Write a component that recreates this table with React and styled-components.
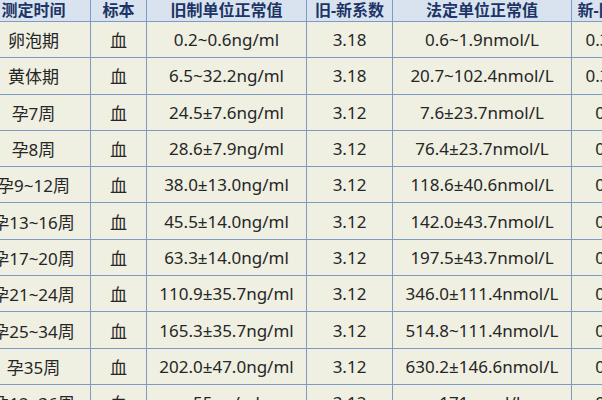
import React from "react";
import styled, { createGlobalStyle } from "styled-components";

const GlobalStyle = createGlobalStyle`
    html, body {
        margin: 0;
        padding: 0;
        background: #eff0e2;
    }
    body {
        font-family: "Noto Sans", "Noto Sans CJK SC", sans-serif;
    }
`;

const Frame = styled.div`
    width: 602px;
    height: 400px;
    overflow: hidden;
    background: #eff0e2;
`;

const Table = styled.table`
    margin-left: -24px;
    border-collapse: collapse;
    table-layout: fixed;
    width: 676px;
`;

const HeadCell = styled.th`
    height: 21px;
    padding: 0;
    background: #d9e3f0;
    color: #1c3566;
    font-size: 16px;
    font-weight: 700;
    line-height: 21px;
    text-align: center;
    white-space: nowrap;
    overflow: hidden;
    border: 1px solid #7d9ac4;
    border-top: none;
`;

const Row = styled.tr`
    height: 36.3px;
`;

const Cell = styled.td`
    padding: 0;
    color: #262626;
    font-size: 17px;
    text-align: center;
    white-space: nowrap;
    overflow: hidden;
    border: 1px solid #7d9ac4;
`;

const columns = [
    { title: "测定时间", width: 114 },
    { title: "标本", width: 56 },
    { title: "旧制单位正常值", width: 160 },
    { title: "旧-新系数", width: 86 },
    { title: "法定单位正常值", width: 179 },
    { title: "新-旧系数", width: 81 },
];

const rows = [
    ["卵泡期", "血", "0.2~0.6ng/ml", "3.18", "0.6~1.9nmol/L", "0.3145"],
    ["黄体期", "血", "6.5~32.2ng/ml", "3.18", "20.7~102.4nmol/L", "0.3145"],
    ["孕7周", "血", "24.5±7.6ng/ml", "3.12", "7.6±23.7nmol/L", "0.32"],
    ["孕8周", "血", "28.6±7.9ng/ml", "3.12", "76.4±23.7nmol/L", "0.32"],
    ["孕9~12周", "血", "38.0±13.0ng/ml", "3.12", "118.6±40.6nmol/L", "0.32"],
    ["孕13~16周", "血", "45.5±14.0ng/ml", "3.12", "142.0±43.7nmol/L", "0.32"],
    ["孕17~20周", "血", "63.3±14.0ng/ml", "3.12", "197.5±43.7nmol/L", "0.32"],
    ["孕21~24周", "血", "110.9±35.7ng/ml", "3.12", "346.0±111.4nmol/L", "0.32"],
    ["孕25~34周", "血", "165.3±35.7ng/ml", "3.12", "514.8~111.4nmol/L", "0.32"],
    ["孕35周", "血", "202.0±47.0ng/ml", "3.12", "630.2±146.6nmol/L", "0.32"],
    ["孕12~36周", "血", "55ng/ml", "3.12", "171nmol/L", "0.32"],
];

export default function App() {
    return (
        <Frame>
            <GlobalStyle />
            <Table>
                <colgroup>
                    {columns.map((c) => (
                        <col key={c.title} style={{ width: c.width }} />
                    ))}
                </colgroup>
                <thead>
                    <tr>
                        {columns.map((c) => (
                            <HeadCell key={c.title}>{c.title}</HeadCell>
                        ))}
                    </tr>
                </thead>
                <tbody>
                    {rows.map((r, i) => (
                        <Row key={i}>
                            {r.map((v, j) => (
                                <Cell key={j}>{v}</Cell>
                            ))}
                        </Row>
                    ))}
                </tbody>
            </Table>
        </Frame>
    );
}
